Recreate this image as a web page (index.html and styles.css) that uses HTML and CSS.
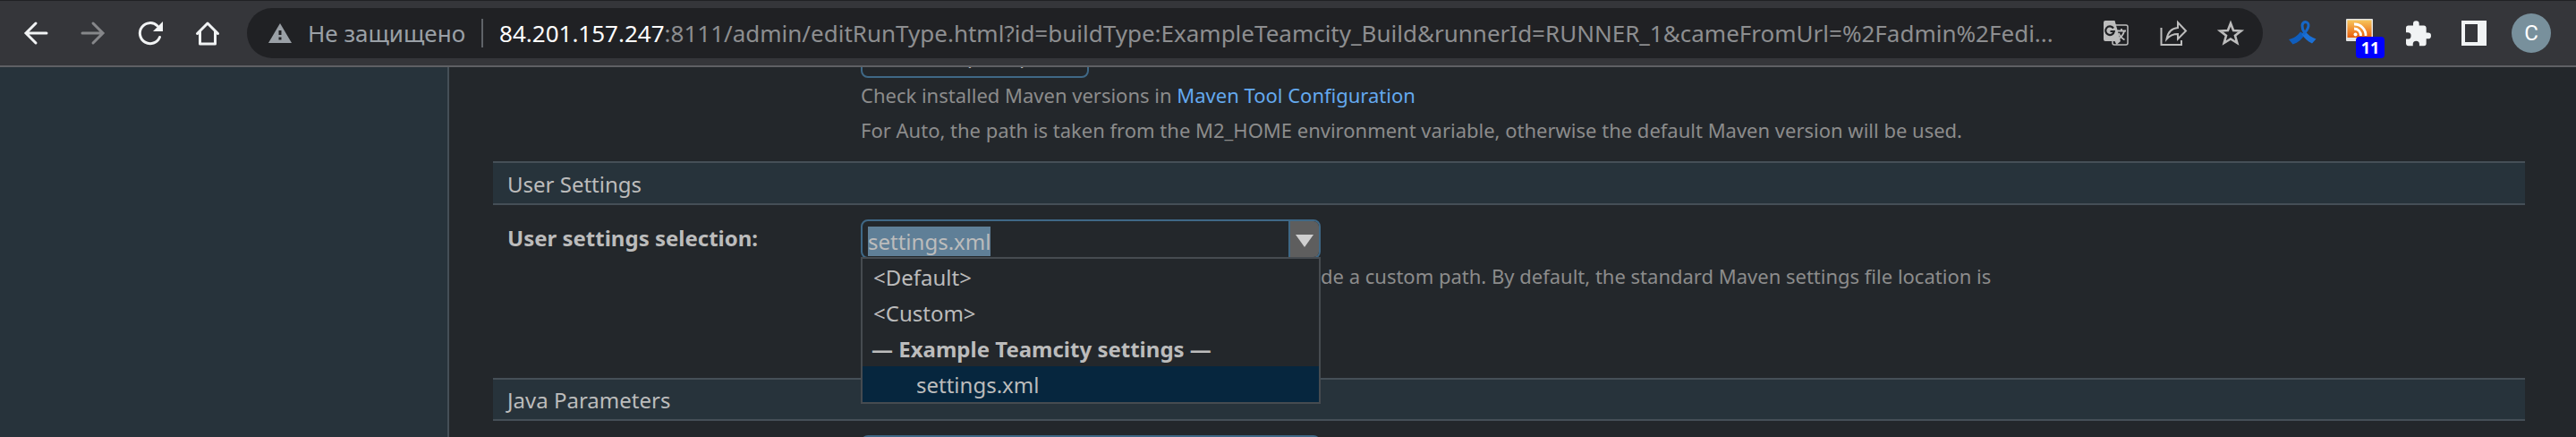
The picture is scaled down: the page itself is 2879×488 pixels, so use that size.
FILE: index.html
```html
<!DOCTYPE html>
<html lang="ru">
<head>
<meta charset="utf-8">
<title>TeamCity</title>
<link rel="stylesheet" href="styles.css">
</head>
<body>
<header class="toolbar">
  <nav class="nav">
    <button class="icon-btn" aria-label="Back"><svg viewBox="0 0 32 32" fill="none" stroke="#f1f3f4" stroke-width="3" stroke-linecap="round" stroke-linejoin="miter"><path d="M28 16H6M16 5L5 16l11 11"/></svg></button>
    <button class="icon-btn" aria-label="Forward"><svg viewBox="0 0 32 32" fill="none" stroke="#86878a" stroke-width="3" stroke-linecap="round"><path d="M4 16h22M16 5l11 11-11 11"/></svg></button>
    <button class="icon-btn" aria-label="Reload"><svg viewBox="0 0 32 32"><path d="M26.500 20.500A11.500 11.500 0 1 1 24 8" fill="none" stroke="#f1f3f4" stroke-width="3" stroke-linecap="round"/><path d="M30 3v11H19z" fill="#f1f3f4"/></svg></button>
    <button class="icon-btn" aria-label="Home"><svg viewBox="0 0 32 32" fill="none" stroke="#f1f3f4" stroke-width="3" stroke-linecap="round" stroke-linejoin="round"><path d="M4.500 16.500L16 5l11.500 11.500M7.500 14v14h17V14"/></svg></button>
  </nav>
  <div class="omnibox">
    <svg class="warn" viewBox="0 0 26 22"><path d="M13 0l13 22H0z" fill="#9aa0a6"/><path d="M11.500 8h3v5h-3zM11.500 15.500h3v3h-3z" fill="#202124"/></svg>
    <span class="insecure">Не защищено</span>
    <span class="url"><b class="host">84.201.157.247</b>:8111/admin/editRunType.html?id=buildType:ExampleTeamcity_Build&amp;runnerId=RUNNER_1&amp;cameFromUrl=%2Fadmin%2Fedi...</span>
    <div class="actions">
      <button class="icon-btn" aria-label="Translate"><svg viewBox="0 0 32 32"><rect x="12" y="7" width="17" height="22" rx="2" fill="none" stroke="#bdbdbd" stroke-width="1.500"/><path d="M17 13.500h10M22 11v2.500M25 14c-1 4-4 7-7 9M19 16c1 3 4 6 6.500 7.500" fill="none" stroke="#bdbdbd" stroke-width="1.800"/><path d="M4 2h10.500l6.500 23-4.500 4-2-4H4a2 2 0 0 1-2-2V4a2 2 0 0 1 2-2z" fill="#bdbdbd"/><path d="M13 10.500A4.800 4.800 0 1 0 13.800 14H9.500" fill="none" stroke="#202124" stroke-width="2.200"/></svg></button>
      <button class="icon-btn" aria-label="Share"><svg viewBox="0 0 32 32" fill="none" stroke="#bdbdbd"><path d="M2.500 10v19h22.500v-5" stroke-width="2"/><path d="M8.500 22.500C10 14.500 14 10.500 21 10V4l9 9.500-9 9V17c-6 0-9 1.500-12.500 5.500z" stroke-width="2"/></svg></button>
      <button class="icon-btn" aria-label="Bookmark"><svg viewBox="0 0 32 32"><path d="M16 5l3.100 8 8.600.500-6.700 5.300 2.300 8.200L16 22.500 8.700 27l2.300-8.200-6.700-5.300 8.600-.500z" fill="none" stroke="#bdbdbd" stroke-width="2.600"/></svg></button>
    </div>
  </div>
  <div class="extensions">
    <button class="icon-btn" aria-label="Ribbon"><svg viewBox="0 0 32 32" fill="none"><path d="M14 14.500c-3 4-7.500 7.500-13 8.500l4.500 5.500c6-2 10.500-6 13.500-11z" fill="#0f5dbd"/><path d="M15.500 17l4-3c3 4 7 7 12 8.500l-4.500 5c-5-2.500-9-6-11.500-10.500z" fill="#1b70d6"/><path d="M18.500 15.500C15 10 15 4 19.500 3.500 25 4 24 11 17 17.500" stroke="#1667c8" stroke-width="3"/></svg></button>
    <button class="icon-btn" aria-label="RSS"><svg viewBox="0 0 32 32"><defs><linearGradient id="feed" x1="0" y1="0" x2="0" y2="1"><stop offset="0" stop-color="#f7c65c"/><stop offset="1" stop-color="#e85e0c"/></linearGradient></defs><rect x="1" y="0" width="30" height="25" rx="1" fill="#e3e3e3"/><rect x="2.500" y="1.500" width="27" height="19.500" fill="url(#feed)"/><path d="M10 11a7.500 7.500 0 0 1 7.500 8M10 6a12.500 12.500 0 0 1 13 13" fill="none" stroke="#fff" stroke-width="2.800"/><circle cx="11.500" cy="17.500" r="2" fill="#fff"/></svg><span class="badge">11</span></button>
    <button class="icon-btn" aria-label="Extensions"><svg viewBox="0 0 24 24"><path transform="translate(1 .700)" d="M20.500 11H19V7c0-1.100-.9-2-2-2h-4V3.500a2.500 2.500 0 0 0-5 0V5H4a2 2 0 0 0-2 2v3.800h1.500a2.700 2.700 0 0 1 0 5.400H2V20c0 1.100.9 2 2 2h3.800v-1.500a2.700 2.700 0 0 1 5.400 0V22H17a2 2 0 0 0 2-2v-4h1.500a2.500 2.500 0 0 0 0-5z" fill="#f1f3f4"/></svg></button>
    <button class="icon-btn" aria-label="Side panel"><svg viewBox="0 0 32 32"><path fill-rule="evenodd" d="M2 2h28v28H2zM6 6v20h14V6z" fill="#f1f3f4"/></svg></button>
    <button class="avatar" aria-label="Profile">C</button>
  </div>
</header>
<div class="page">
  <aside class="sidebar"></aside>
  <main class="content">
    <div class="row row-version">
      <span></span>
      <div class="field">
        <select class="version" aria-label="Maven version"><option>Default (3.8.6)</option></select>
        <p class="hint">Check installed Maven versions in <a href="#">Maven Tool Configuration</a></p>
        <p class="hint">For Auto, the path is taken from the M2_HOME environment variable, otherwise the default Maven version will be used.</p>
      </div>
    </div>
    <h2 class="section">User Settings</h2>
    <div class="row row-settings">
      <label class="label" for="settings">User settings selection:</label>
      <div class="field">
        <div class="combo">
          <input class="combo-input" id="settings" type="text" value="settings.xml" spellcheck="false">
          <button class="combo-toggle" aria-label="Show options"><svg viewBox="0 0 20 14"><path d="M0 0h20L10 14z" fill="#cfcfcf"/></svg></button>
          <ul class="menu" role="listbox">
            <li role="option">&lt;Default&gt;</li>
            <li role="option">&lt;Custom&gt;</li>
            <li class="group">— Example Teamcity settings —</li>
            <li class="child" role="option" aria-selected="true">settings.xml</li>
          </ul>
        </div>
        <p class="hint beside-menu">de a custom path. By default, the standard Maven settings file location is</p>
      </div>
    </div>
    <h2 class="section">Java Parameters</h2>
    <div class="row">
      <span></span>
      <div class="field"><input class="jdk" type="text" aria-label="JDK"></div>
    </div>
  </main>
</div>
<script src="script.js"></script>
</body>
</html>
```
FILE: styles.css
```css
* { box-sizing: border-box; }
body {
  margin: 0;
  height: 100vh;
  display: flex;
  flex-direction: column;
  overflow: hidden;
  background: #23272b;
  color: #bcbcbc;
  font-family: "Noto Sans", "Open Sans", sans-serif;
  font-size: 24px;
}
button, input, select { font: inherit; color: inherit; margin: 0; padding: 0; }
svg { display: block; width: 100%; height: 100%; }

.toolbar {
  flex: none;
  display: flex;
  align-items: center;
  padding: 8px 28px 8px 24px;
  background: #35363a;
  border-top: 1px solid #202124;
  border-bottom: 2px solid #5f6064;
}
.nav, .actions, .extensions { display: flex; align-items: center; gap: 32px; }
.icon-btn { position: relative; width: 32px; height: 32px; border: 0; background: none; }
.omnibox {
  flex: 1;
  min-width: 0;
  display: flex;
  align-items: center;
  height: 56px;
  margin: 0 28px;
  padding: 0 20px 0 24px;
  border-radius: 28px;
  background: #202124;
  font-size: 26px;
}
.warn { flex: none; width: 26px; height: 22px; margin-right: 18px; }
.insecure {
  flex: none;
  padding-right: 18px;
  border-right: 2px solid #5f6368;
  line-height: 32px;
  color: #9aa0a6;
}
.url {
  flex: 1;
  min-width: 0;
  padding-left: 18px;
  overflow: hidden;
  white-space: nowrap;
  color: #8d8e90;
}
.host { font-weight: 400; color: #fff; }
.badge {
  position: absolute;
  left: 12px;
  top: 20px;
  width: 32px;
  border-radius: 4px;
  background: #0000ff;
  color: #fff;
  font-size: 18px;
  font-weight: 700;
  line-height: 24px;
}
.avatar {
  width: 44px;
  height: 44px;
  margin-left: -6px;
  border: 0;
  border-radius: 50%;
  background: #78909c;
  color: #fff;
  font-family: Roboto, sans-serif;
}

.page { flex: 1; min-height: 0; display: flex; }
.sidebar { flex: none; width: 502px; background: #27333b; border-right: 2px solid #454f57; }
.content { flex: 1; min-width: 0; padding: 0 57px 0 49px; overflow: hidden; }
.row { display: grid; grid-template-columns: 395px 1fr; padding: 16px 0 0 16px; }
.row-version { padding-top: 0; padding-bottom: 15px; }
.row-settings { padding-bottom: 94px; }
.hint { margin: 0; font-size: 22px; line-height: 39px; color: #8c8c8c; }
.hint a { color: #64a9ee; text-decoration: none; }
.section {
  margin: 0;
  padding: 2px 16px 0;
  background: #27333b;
  border: solid #454f57;
  border-width: 2px 0;
  font-size: 24px;
  font-weight: 400;
  line-height: 43px;
}
.section:last-of-type { line-height: 42px; }
.label { font-weight: 700; line-height: 42px; }
.version {
  display: block;
  width: 255px;
  height: 44px;
  margin-top: -32px;
  padding: 0 26px 6px;
  appearance: none;
  background: #23272b;
  border: 2px solid #3f6886;
  border-radius: 8px;
}
.combo {
  position: relative;
  display: flex;
  width: 514px;
  height: 44px;
  border: 2px solid #3f6886;
  border-radius: 8px;
}
.combo-input {
  flex: 1;
  min-width: 0;
  padding: 4px 6px 0;
  border: 0;
  outline: 0;
  background: none;
}
.combo-input::selection { background: #5f7f97; color: #bcbcbc; }
.combo-toggle {
  width: 34px;
  padding: 4px 6px 0;
  border: 0;
  border-left: 2px solid #3f6886;
  border-radius: 0 6px 6px 0;
  background: #5e5e5e;
}
.combo-toggle svg { height: 14px; }
.menu {
  position: absolute;
  top: 40px;
  left: -2px;
  right: -2px;
  margin: 0;
  padding: 0;
  list-style: none;
  background: #23272b;
  border: 2px solid #464b50;
  line-height: 38px;
}
.menu li { padding: 2px 12px 0; }
.menu .group { padding-left: 10px; font-weight: 700; }
.menu .child { padding-left: 60px; }
.menu [aria-selected="true"] { background: #06263e; }
.beside-menu { padding-left: 514px; }
.jdk {
  display: block;
  width: 514px;
  height: 44px;
  background: none;
  border: 2px solid #3f6886;
  border-radius: 8px;
}
```
FILE: script.js
```js
const settings = document.getElementById('settings');
settings.focus();
settings.select();
```
